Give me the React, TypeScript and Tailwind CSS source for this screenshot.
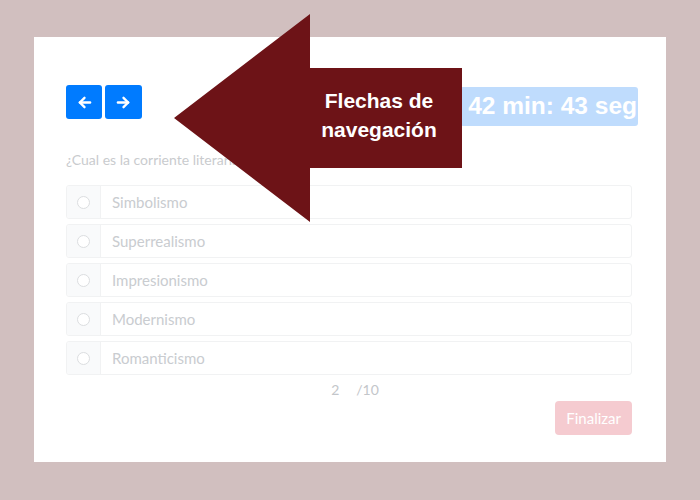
const options = ['Simbolismo', 'Superrealismo', 'Impresionismo', 'Modernismo', 'Romanticismo']

function ArrowIcon({ dir }: { dir: 'left' | 'right' }) {
  return (
    <svg width="15" height="15" viewBox="0 0 16 16" fill="none" stroke="white" strokeWidth="2.5" strokeLinecap="round" strokeLinejoin="round">
      {dir === 'left' ? (
        <>
          <path d="M14 8H3" />
          <path d="M8 3L3 8l5 5" />
        </>
      ) : (
        <>
          <path d="M2 8h11" />
          <path d="M8 3l5 5-5 5" />
        </>
      )}
    </svg>
  )
}

export default function App() {
  return (
    <div className="relative h-[500px] w-[700px] overflow-hidden bg-[#d1bfbf] pt-[37px] pl-[34px] font-['Lato',sans-serif]">
      <div className="h-[425px] w-[632px] bg-white pt-[48px] pr-[34px] pl-[32px]">
        <div className="flex items-start justify-between">
          <div className="flex gap-[3px]">
            <button className="flex h-[34px] w-[36px] items-center justify-center rounded-[3px] bg-[#007bff]">
              <ArrowIcon dir="left" />
            </button>
            <button className="flex h-[34px] w-[37px] items-center justify-center rounded-[3px] bg-[#007bff]">
              <ArrowIcon dir="right" />
            </button>
          </div>
          <div className="-mr-[6px] mt-[2px] flex h-[39px] items-center rounded-[3px] bg-[#bfdcfd] pr-[1px] pl-[8px] font-['Liberation_Sans',Arial,sans-serif] text-[24.5px] font-bold text-white">
            42 min: 43 seg
          </div>
        </div>

        <p className="mt-[23px] text-[14px] text-[#c9cbce]">¿Cual es la corriente literaria del texto?</p>

        <div className="mt-[15px] flex flex-col gap-[5px]">
          {options.map((opt) => (
            <div key={opt} className="flex h-[34px] overflow-hidden rounded-[3px] border border-[#f1f2f3]">
              <div className="flex w-[34px] items-center justify-center border-r border-[#f1f2f3] bg-[#f9fafb]">
                <span className="h-[13px] w-[13px] rounded-full border border-[#dcdee0] bg-white" />
              </div>
              <div className="flex flex-1 items-center pl-[11px] text-[15px] text-[#c9ccd0]">{opt}</div>
            </div>
          ))}
        </div>

        <div className="mt-[4px] flex justify-center gap-[17px] pl-[12px] text-[14px] text-[#c3c6ca]">
          <span>2</span>
          <span>/10</span>
        </div>

        <div className="mt-[1px] flex justify-end">
          <button className="h-[34px] rounded-[4px] bg-[#f5cbd0] px-[11px] text-[15px] text-white">Finalizar</button>
        </div>
      </div>

      <svg className="absolute top-0 left-0" width="700" height="500" viewBox="0 0 700 500">
        <polygon points="174,118 310,14 310,68 462,68 462,168 310,168 310,222" fill="#6d1317" />
      </svg>
      <div className="absolute top-[86px] left-[310px] flex w-[138px] flex-col items-center font-['Liberation_Sans',Arial,sans-serif] text-[21px] leading-[29px] font-bold text-white">
        <span>Flechas de</span>
        <span>navegación</span>
      </div>
    </div>
  )
}
